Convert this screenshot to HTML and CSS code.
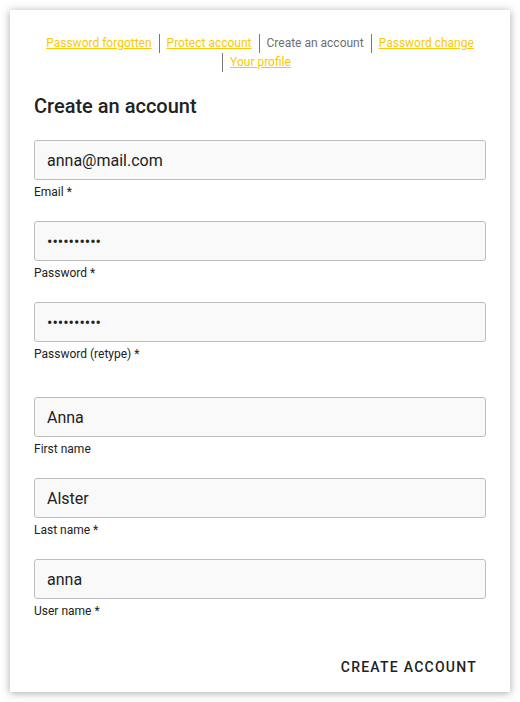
FILE: index.html
```html
<!DOCTYPE html>
<html lang="en">
<head>
<meta charset="utf-8">
<title>Create an account</title>
<link rel="stylesheet" href="styles.css">
</head>
<body>
<div class="card">
  <nav class="nav">
    <span class="nav-item"><a href="#">Password forgotten</a></span><span class="nav-item"><a href="#">Protect account</a></span><span class="nav-item current">Create an account</span><span class="nav-item"><a href="#">Password change</a></span><span class="nav-item"><a href="#">Your profile</a></span>
  </nav>
  <h1 class="title">Create an account</h1>
  <form class="form">
    <div class="field">
      <input class="input" type="text" value="anna@mail.com">
      <label class="label">Email *</label>
    </div>
    <div class="field">
      <input class="input" type="password" value="1234567890">
      <label class="label">Password *</label>
    </div>
    <div class="field field-sep">
      <input class="input" type="password" value="1234567890">
      <label class="label">Password (retype) *</label>
    </div>
    <div class="field">
      <input class="input" type="text" value="Anna">
      <label class="label">First name</label>
    </div>
    <div class="field">
      <input class="input" type="text" value="Alster">
      <label class="label">Last name *</label>
    </div>
    <div class="field">
      <input class="input" type="text" value="anna">
      <label class="label">User name *</label>
    </div>
    <div class="actions">
      <button class="btn" type="button">Create account</button>
    </div>
  </form>
</div>
</body>
</html>
```
FILE: styles.css
```css
* { box-sizing: border-box; }
html, body { margin: 0; padding: 0; background: #fff; }
body {
  font-family: Roboto, "Liberation Sans", sans-serif;
  color: #222;
}
.card {
  margin: 10px;
  width: 500px;
  height: 682px;
  background: #fff;
  box-shadow: 0 1px 8px rgba(0,0,0,0.35);
  padding: 24px 24px 8px;
}
.nav {
  text-align: center;
  font-size: 12px;
  line-height: 19px;
}
.nav-item {
  display: inline-block;
  padding: 0 7px;
  vertical-align: top;
}
.nav-item + .nav-item { border-left: 1px solid #777; }
.nav-item a { color: #fcc800; text-decoration: underline; }
.nav-item.current { color: #6f6f6f; }
.title {
  margin: 22px 0 22px;
  font-size: 20px;
  line-height: 24px;
  font-weight: 500;
  color: #222;
}
.form { display: flex; flex-direction: column; }
.field {
  display: flex;
  flex-direction: column;
  margin-bottom: 21px;
}
.field-sep { margin-bottom: 35px; }
.input {
  height: 40px;
  width: 100%;
  border: 1px solid #bdbdbd;
  border-radius: 3px;
  background: #f9f9f9;
  padding: 0 12px;
  font-family: Roboto, "Liberation Sans", sans-serif;
  font-size: 16px;
  color: #222;
  outline: none;
}
.label {
  margin-top: 4px;
  font-size: 12px;
  line-height: 16px;
  color: #222;
}
.actions {
  display: flex;
  justify-content: flex-end;
  margin-top: 9px;
}
.btn {
  height: 36px;
  padding: 0 8px;
  margin-right: 1px;
  border: none;
  background: transparent;
  font-family: Roboto, "Liberation Sans", sans-serif;
  font-size: 14px;
  font-weight: 500;
  letter-spacing: 1.25px;
  text-transform: uppercase;
  color: #222;
}
```
